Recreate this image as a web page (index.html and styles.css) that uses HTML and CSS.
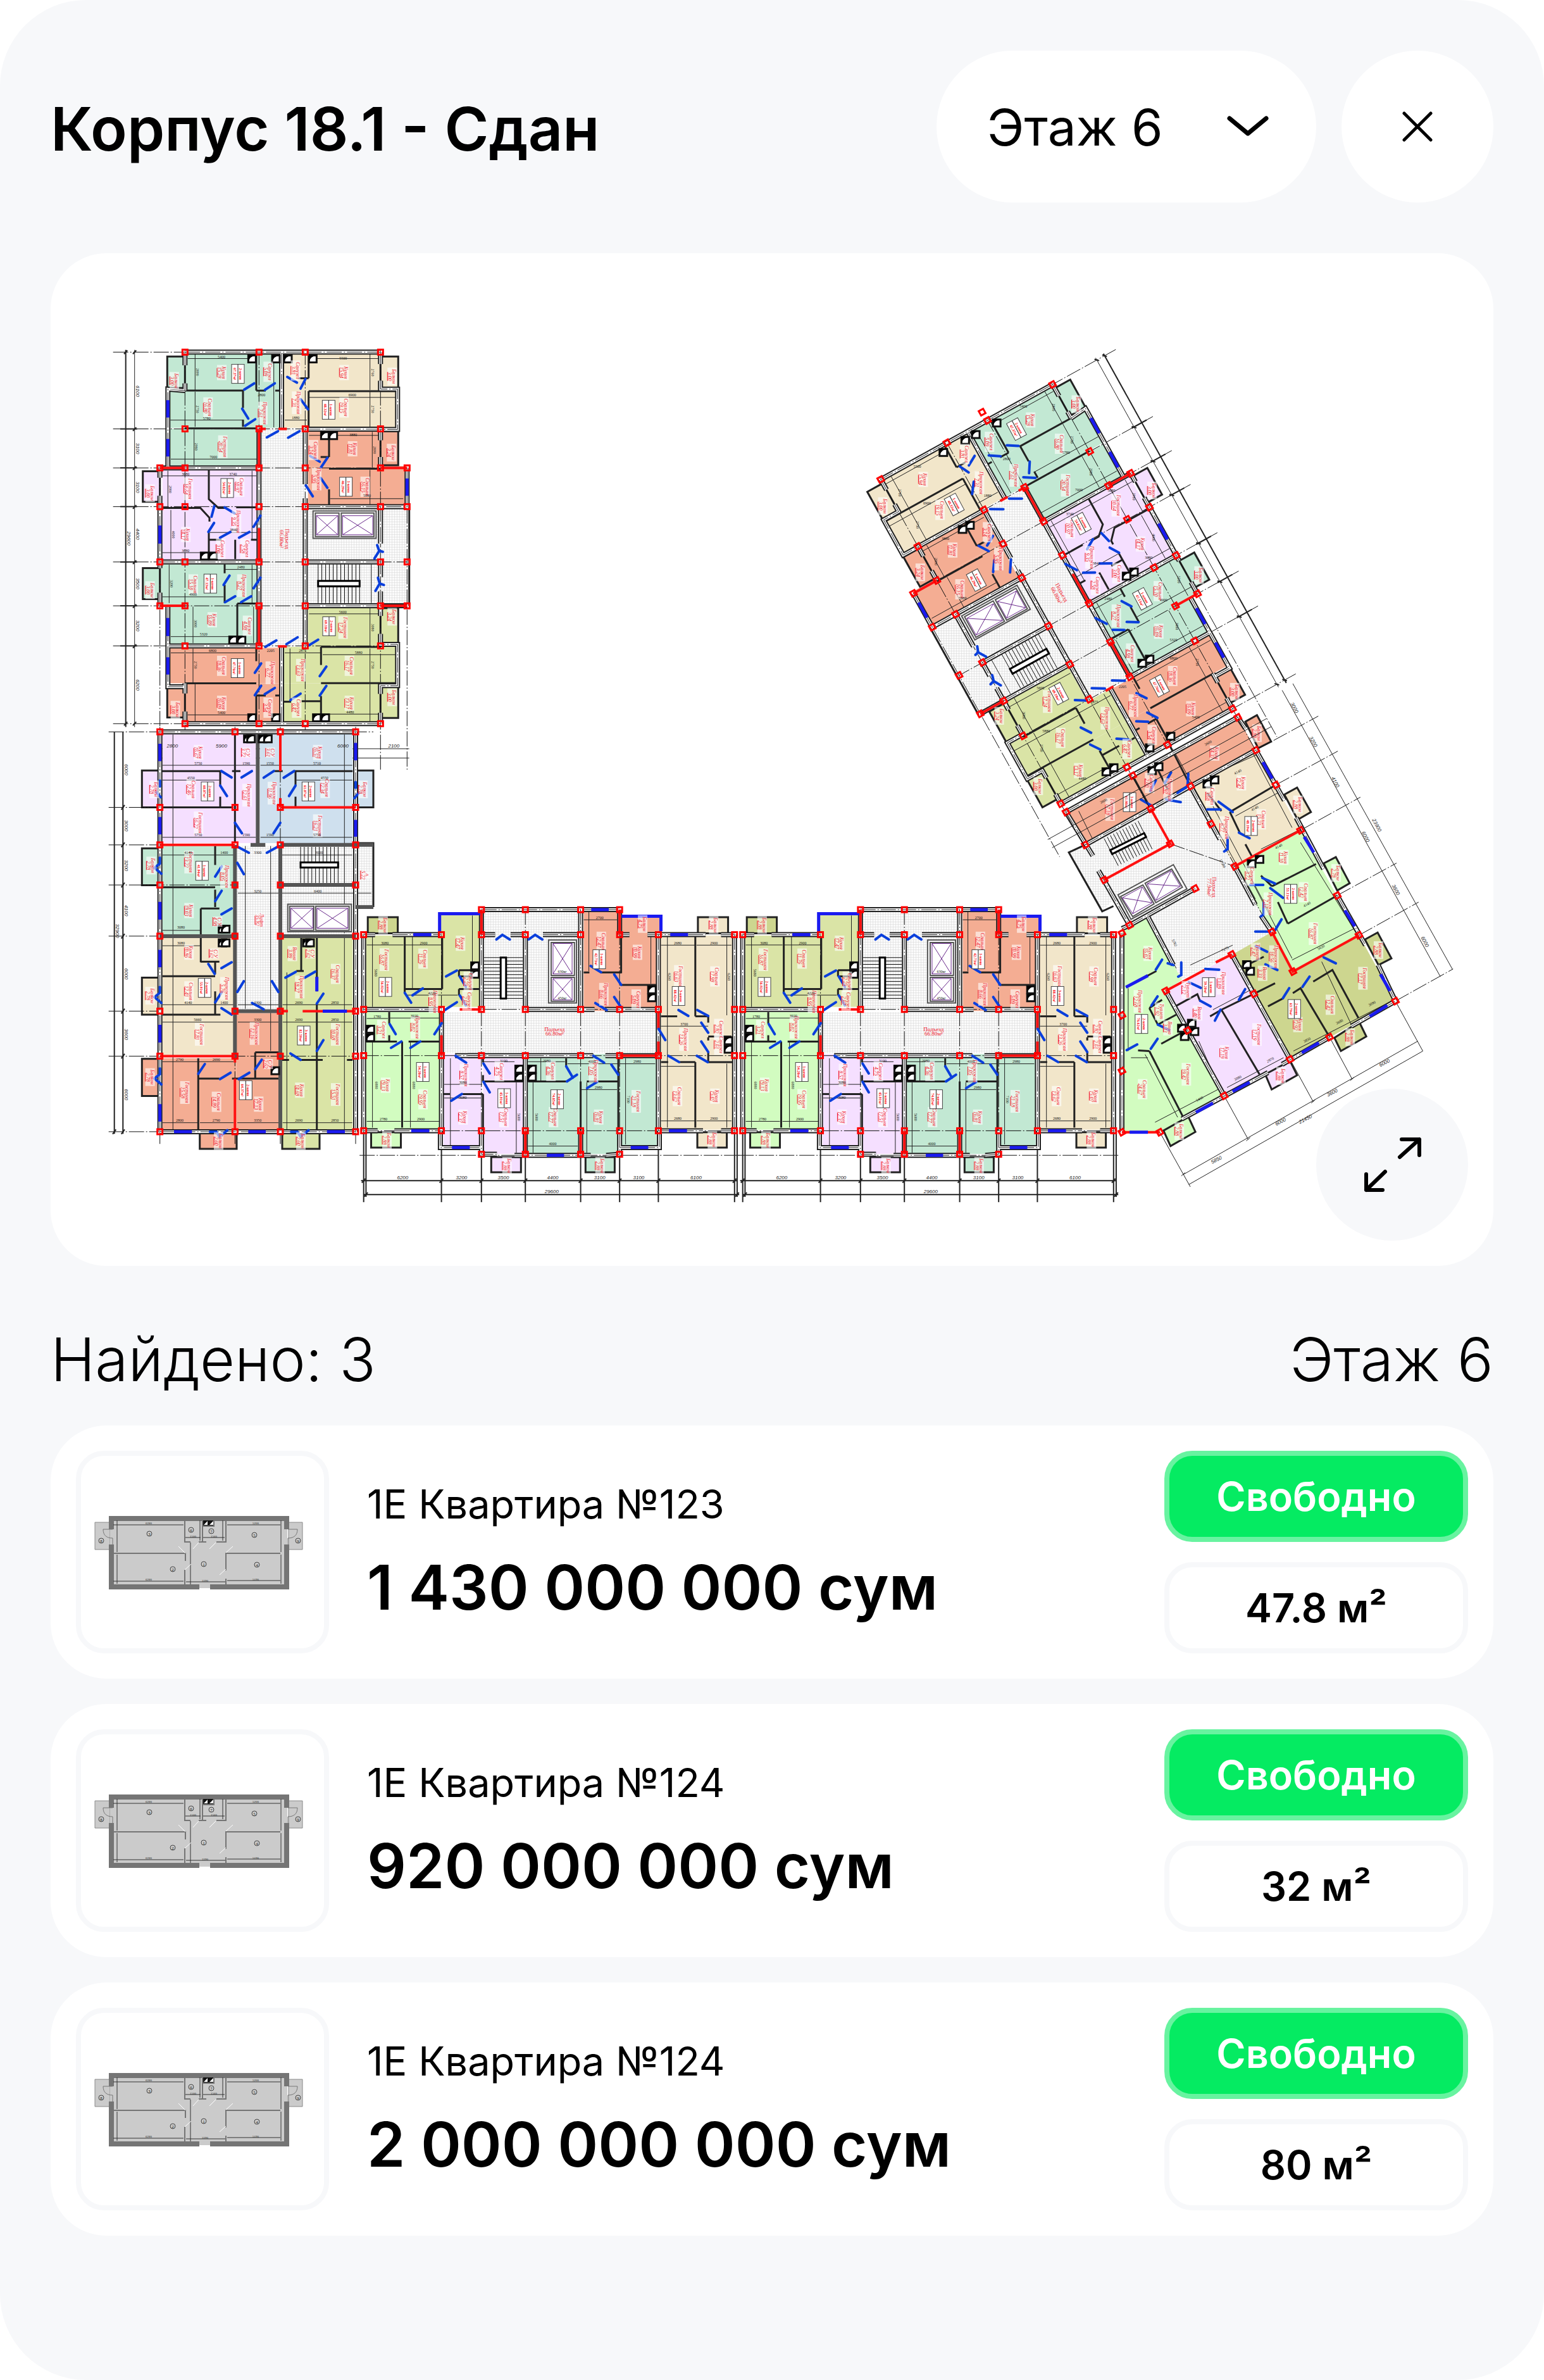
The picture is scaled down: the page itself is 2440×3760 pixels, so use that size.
FILE: index.html
```html
<!DOCTYPE html>
<html lang="ru">
<head>
<meta charset="utf-8">
<meta name="viewport" content="width=device-width, initial-scale=1">
<title>Корпус 18.1</title>
<link rel="stylesheet" href="styles.css">
</head>
<body>
<svg class="defs" aria-hidden="true">
  <symbol id="flat" viewBox="0 0 360 140">
    <g fill="#cbcbcb" stroke="#8a8a8a">
      <path d="M10 19h24v43H10zM316 19h22v43h-22z"/>
      <path stroke="none" d="M34 11h280v112H34z"/>
    </g>
    <g transform="translate(0 2)">
    <path fill="none" stroke="#757575" stroke-width="8" d="M36 28V11h277v17M36 52v67h139M192 119h121V52"/>
    <path fill="none" stroke="#757575" stroke-width="2" d="M39 66h114v12M152 92v24M152 14v34h9M174 48h12M180 14v34M202 48h15V14M303 66h-86v27M217 106v10M181 23h17V14"/>
    <path fill="none" stroke="#333" stroke-width="1" d="M39 21h111M39 110h111M219 21h84M219 109h84M45 14v50M45 68v46M304 14v50M304 68v46M153 41h24M181 41h34M176 14v32M212 14v32M161 49v66M154 111h62"/>
    <path fill="#111" d="M181 14h16v8h-16z"/><path fill="#fff" d="M188 15v6h-6zM197 15v6h-6z"/>
    <path fill="none" stroke="#fff" stroke-width="1" d="M142 55l11 11M165 59l9-10M191 59l10-10M217 65l11-10M152 92l10-9M207 100l10-9"/>
    <path fill="none" stroke="#777" d="M23 28h15M23 28c0 10 6 14 15 14v10M330 28h-15M330 28c0 10-6 14-15 14v10"/>
    <g fill="none" stroke="#444"><circle cx="96" cy="35" r="4"/><circle cx="162" cy="29" r="4"/><circle cx="194" cy="31" r="4"/><circle cx="262" cy="37" r="4"/><circle cx="133" cy="91" r="4"/><circle cx="182" cy="83" r="4"/><circle cx="266" cy="84" r="4"/><circle cx="20" cy="46" r="4"/><circle cx="331" cy="46" r="4"/></g>
    <g class="flat-text"><text x="96" y="38">3</text><text x="162" y="32">6</text><text x="194" y="34">7</text><text x="262" y="40">5</text><text x="133" y="94">2</text><text x="182" y="86">1</text><text x="266" y="87">4</text><text x="20" y="49">8</text><text x="331" y="49">9</text></g>
    <g class="flat-dim"><text x="95" y="20">6280</text><text x="264" y="20">5200</text><text x="95" y="109">6280</text><text x="264" y="109">5190</text><text x="165" y="41">1500</text><text x="198" y="41">1560</text><text x="184" y="111">3390</text></g>
    </g>
  </symbol>
</svg>
<main class="panel">
  <header class="top">
    <h1 class="title">Корпус 18.1 - Сдан</h1>
    <div class="floor">
      <select class="floor-select" aria-label="Этаж"><option>Этаж 6</option></select>
      <svg class="floor-chevron" viewBox="0 0 72 40" aria-hidden="true"><path d="M7 7l29 24L65 7"/></svg>
    </div>
    <button class="close" type="button" aria-label="Закрыть"><svg class="close-icon" viewBox="0 0 48 48" aria-hidden="true"><path d="M3 3l42 42M45 3L3 45"/></svg></button>
  </header>

  <section class="map" aria-label="План этажа">
    <svg class="plan" id="plan" viewBox="80 400 2280 1600">
      <defs><pattern id="tile" width="4" height="4" patternUnits="userSpaceOnUse"><path class="tile-back" d="M0 0h4v4H0z"/><path class="tile" d="M0 0H4V4"/></pattern></defs>
    </svg>
    <button class="expand" type="button" aria-label="Развернуть"><svg class="expand-icon" viewBox="0 0 96 96" aria-hidden="true"><path d="M60 36l31-28M63 8h28v25M37 59L7 88M7 63v25h26"/></svg></button>
  </section>

  <div class="summary"><span>Найдено: 3</span><span>Этаж 6</span></div>

  <ul class="list">
    <li class="card">
      <div class="thumb"><svg class="thumb-plan" viewBox="0 0 360 140" role="img" aria-label="Планировка"><use href="#flat"/></svg></div>
      <div class="info"><p class="name">1E Квартира №123</p><p class="price">1 430 000 000 сум</p></div>
      <div class="tags"><span class="tag tag-free">Свободно</span><span class="tag">47.8 м²</span></div>
    </li>
    <li class="card">
      <div class="thumb"><svg class="thumb-plan" viewBox="0 0 360 140" role="img" aria-label="Планировка"><use href="#flat"/></svg></div>
      <div class="info"><p class="name">1E Квартира №124</p><p class="price">920 000 000 сум</p></div>
      <div class="tags"><span class="tag tag-free">Свободно</span><span class="tag">32 м²</span></div>
    </li>
    <li class="card">
      <div class="thumb"><svg class="thumb-plan" viewBox="0 0 360 140" role="img" aria-label="Планировка"><use href="#flat"/></svg></div>
      <div class="info"><p class="name">1E Квартира №124</p><p class="price">2 000 000 000 сум</p></div>
      <div class="tags"><span class="tag tag-free">Свободно</span><span class="tag">80 м²</span></div>
    </li>
  </ul>
</main>
<script src="plan.js"></script>
</body>
</html>
```

FILE: styles.css
```css
* { box-sizing: border-box; }
body { margin: 0; background: #fff; color: #000; font-family: Inter, "Liberation Sans", sans-serif; }
h1, p, ul { margin: 0; padding: 0; }
button, select { border: 0; font: inherit; color: inherit; cursor: pointer; }
.defs { display: none; }

.panel { min-height: 100vh; padding: 80px; background: #f7f8fa; border-radius: 136px; }

.top { display: flex; align-items: center; gap: 40px; margin-bottom: 80px; }
.title { flex: 1; padding-top: 8px; font-size: 95px; line-height: 120px; font-weight: 600; }
.floor { position: relative; width: 600px; height: 240px; }
.floor-select { width: 100%; height: 100%; padding: 0 160px 0 80px; appearance: none; background: #fff; border-radius: 120px; font-size: 80px; }
.floor-chevron { position: absolute; top: 100px; right: 72px; width: 72px; height: 40px; pointer-events: none; }
.floor-chevron path { fill: none; stroke: #000; stroke-width: 7; stroke-linecap: round; stroke-linejoin: round; }
.close { display: grid; place-items: center; width: 240px; height: 240px; padding: 0; background: #fff; border-radius: 50%; }
.close-icon { width: 48px; height: 48px; fill: none; stroke: #000; stroke-width: 5; stroke-linecap: round; }

.map { position: relative; background: #fff; border-radius: 88px; overflow: hidden; }
.plan { display: block; width: 100%; height: auto; }
.expand { position: absolute; right: 40px; bottom: 40px; display: grid; place-items: center; width: 240px; height: 240px; padding: 0; background: #f7f8fa; border-radius: 50%; }
.expand-icon { width: 96px; height: 96px; fill: none; stroke: #000; stroke-width: 6; stroke-linecap: round; stroke-linejoin: round; }

.summary { display: flex; justify-content: space-between; margin: 88px 0 44px; font-size: 95px; line-height: 120px; font-weight: 300; }

.list { display: flex; flex-direction: column; gap: 40px; list-style: none; }
.card { display: flex; gap: 60px; padding: 40px; background: #fff; border-radius: 88px; }
.thumb { display: grid; place-items: center; width: 400px; height: 320px; border: 8px solid #f7f8fa; border-radius: 44px; }
.thumb-plan { width: 360px; height: 140px; margin-top: 8px; }
.info { flex: 1; display: flex; flex-direction: column; justify-content: center; gap: 32px; }
.name { font-size: 63px; line-height: 80px; }
.price { font-size: 97px; line-height: 120px; font-weight: 600; }
.tags { display: flex; flex-direction: column; gap: 32px; width: 480px; }
.tag { display: grid; place-items: center; height: 144px; border: 8px solid #f7f8fa; border-radius: 44px; font-size: 63px; font-weight: 600; }
.tag-free { background: #05eb62; border-color: #68f3a0; color: #fff; }

.flat-text { font: 7px "Liberation Serif", serif; text-anchor: middle; fill: #222; }
.flat-dim { font: 5px "Liberation Serif", serif; text-anchor: middle; fill: #222; }

.tile-back { fill: #fbfbfb; }
.tile { fill: none; stroke: #d6d6d6; stroke-width: 1; }
.hall { fill: url(#tile); }
.thin { fill: none; stroke: #222; stroke-width: 3; }
.wall-out { fill: none; stroke: #222; stroke-width: 8; }
.wall-in { fill: none; stroke: #fff; stroke-width: 4; }
.gray { fill: none; stroke: #555; stroke-width: 6; }
.red { fill: none; stroke: #f11; stroke-width: 4; }
.axis { fill: none; stroke: #111; stroke-width: 1; stroke-dasharray: 24 3 2 3; }
.wall-axis { fill: none; stroke: #222; stroke-width: 1; stroke-dasharray: 24 3 2 3; }
.dim { fill: none; stroke: #222; stroke-width: 1; }
.scale { fill: none; stroke: #222; stroke-width: 2; }
.column { fill: none; stroke: #f00; stroke-width: 3; }
.door { fill: none; stroke: #0a3fdc; stroke-width: 4; stroke-linecap: round; }
.window { fill: none; stroke: #1a1af0; stroke-width: 5; }
.lift { fill: #fff; stroke: #6a2a8c; stroke-width: 1; }
.lift-box { fill: #fff; stroke: #555; stroke-width: 2; }
.tread { fill: none; stroke: #111; stroke-width: 1; }
.rail { fill: #fff; stroke: #000; stroke-width: 3; }
.shaft { fill: #fff; stroke: #111; stroke-width: 3; }
.shaft-fill { fill: #000; }
.label { font: 8px "Liberation Serif", serif; font-style: italic; fill: #f01428; text-anchor: middle; }
.label-line { stroke: #f01428; stroke-width: 1; }
.label-box { fill: #fff; fill-opacity: .6; }
.area { font: bold 6px "Liberation Serif", serif; fill: #f00; text-anchor: middle; }
.area-box { fill: #fff; stroke: #444; stroke-width: 1; }
.num { font: italic 8px "Liberation Sans", sans-serif; fill: #222; text-anchor: middle; }
.size { font: 6px "Liberation Serif", serif; fill: #111; text-anchor: middle; }
.hall-name { font: 9px "Liberation Serif", serif; fill: #f01428; text-anchor: middle; }
```

FILE: plan.js
```js
// Draws the storey plan: each block lists its shapes in the block's own units,
// and `at` places those units on the plan.
const svg = document.getElementById('plan');
const NS = 'http://www.w3.org/2000/svg';

const fills = { t: '#c2e8d3', b: '#f2e6ca', s: '#f4ad93', l: '#f5dfff', o: '#dae4a6', u: '#cfe0ee', g: '#d2fcc0', k: '#cdd68f' };

function add(tag, attrs, text) {
  const el = document.createElementNS(NS, tag);
  for (const k in attrs) el.setAttribute(k, attrs[k]);
  if (text) el.textContent = text;
  svg.appendChild(el);
}
const items = s => (s || '').split(';').map(x => x.trim()).filter(Boolean);
const nums = s => s.trim().split(/\s+/).map(Number);
const pairs = n => n.reduce((r, v, i) => (i % 2 ? r[r.length - 1].push(v) : r.push([v]), r), []);
const quad = n => n.length === 4 ? [[n[0], n[1]], [n[2], n[1]], [n[2], n[3]], [n[0], n[3]]] : pairs(n);
const mix = (a, b, t) => [a[0] + (b[0] - a[0]) * t, a[1] + (b[1] - a[1]) * t];

function drawBlock(b, at) {
  const d = (pts, close) => 'M' + pts.map(p => at(p[0], p[1]).map(v => v.toFixed(1)).join(' ')).join('L') + (close ? 'Z' : '');
  const line = (cls, pts) => add('path', { class: cls, d: d(pts) });
  const shape = (cls, pts) => add('path', { class: cls, d: d(pts, true) });
  const lines = (cls, s) => items(s).forEach(i => line(cls, pairs(nums(i))));

  items(b.halls).forEach(i => shape('hall', quad(nums(i))));
  items(b.rooms).forEach(i => add('path', { fill: fills[i[0]], d: d(quad(nums(i.slice(1))), true) }));
  items(b.balconies).forEach(i => add('path', { class: 'thin', style: 'fill:' + fills[i[0]], d: d(quad(nums(i.slice(1))), true) }));
  lines('axis', b.axes);
  lines('dim', b.dims);
  lines('scale', b.scales);
  lines('thin', b.thin);
  lines('wall-out', b.walls);
  lines('wall-in', b.walls);
  lines('wall-axis', b.walls);
  lines('gray', b.gray);
  lines('red', b.red);
  lines('window', b.windows);
  items(b.stairs).forEach(i => {
    const [n, ...r] = nums(i), q = quad(r);
    for (let k = 0; k <= n; k++) line('tread', [mix(q[0], q[1], k / n), mix(q[3], q[2], k / n)]);
    const m = (u, v) => mix(mix(q[0], q[1], u), mix(q[3], q[2], u), v);
    shape('rail', [m(0, .43), m(1, .43), m(1, .57), m(0, .57)]);
  });
  items(b.liftBoxes).forEach(i => shape('lift-box', quad(nums(i))));
  items(b.lifts).forEach(i => {
    const q = quad(nums(i));
    shape('lift', q); line('lift', [q[0], q[2]]); line('lift', [q[1], q[3]]);
  });
  items(b.shafts).forEach(i => {
    const [x, y] = at(...nums(i));
    add('rect', { class: 'shaft', x: x - 6, y: y - 5, width: 12, height: 11 });
    add('path', { class: 'shaft-fill', d: `M${x - 6} ${y + 5}V${y - 5}H${x + 6}Q${x - 3} ${y - 4} ${x - 6} ${y + 5}` });
  });
  lines('door', b.doors);
  const o = at(0, 0), e = at(100, 0);
  const turn = b.turn !== undefined ? b.turn : Math.atan2(e[1] - o[1], e[0] - o[0]) * 180 / Math.PI;
  const column = (x, y) => {
    const [px, py] = at(x, y);
    add('rect', { class: 'column', x: px - 4, y: py - 4, width: 8, height: 8, transform: `rotate(${turn} ${px} ${py})` });
  };
  items(b.columns).forEach(i => {
    const [y, ...xs] = nums(i);
    xs.forEach(x => column(x, y));
  });
  items(b.points).forEach(i => column(...nums(i)));
  items(b.labels).forEach(i => {
    const [x, y, name, n] = i.split(/\s+/), [px, py] = at(+x, +y);
    const w = name.length * 4;
    add('rect', { class: 'label-box', x: px - 7, y: py - w / 2 - 2, width: 15, height: w + 4 });
    add('text', { class: 'label', transform: `translate(${px + 1} ${py}) rotate(90)` }, name);
    add('text', { class: 'label', transform: `translate(${px - 6} ${py}) rotate(90)` }, n);
    add('path', { class: 'label-line', d: `M${px - 7} ${py - 7}v14` });
  });
  items(b.areas).forEach(i => {
    const [x, y, name, n] = i.split(/\s+/), [px, py] = at(+x, +y);
    const t = o[0] < e[0] ? 90 : 62;
    const g = `translate(${px} ${py}) rotate(${t})`;
    add('rect', { class: 'area-box', x: -15, y: -10, width: 30, height: 20, transform: g });
    add('path', { class: 'dim', d: 'M-15 0h30', transform: g });
    add('text', { class: 'area', y: -2, transform: g }, name);
    add('text', { class: 'area', y: 7, transform: g }, n);
  });
  const texts = (cls, s) => items(s).forEach(i => {
    const [x, y, n, r] = i.split(/\s+/), [px, py] = at(+x, +y);
    add('text', { class: cls, transform: `translate(${px} ${py}) rotate(${r || 0})` }, n);
  });
  texts('size', b.sizes);
  texts('num', b.nums);
  texts('hall-name', b.names);
}

const tower = {
  halls: '748 386 967 1226; 967 687 1450 1071',
  rooms: `t 397 95 845 238; t 320 238 845 382; t 320 386 748 528; b 867 95 1324 238; b 867 238 1398 382;
    s 980 395 1324 530; s 980 530 1445 680; l 290 545 748 892; t 278 910 748 1071; t 320 1071 748 1218;
    s 320 1233 845 1371; s 397 1371 845 1520; o 980 1080 1324 1230; o 867 1230 1398 1371; o 867 1371 1324 1520`,
  balconies: `t 313 106 397 228; b 1324 106 1408 228; s 1324 395 1408 527; l 197 550 278 668; t 197 925 278 1045;
    s 313 1384 397 1503; o 1324 1080 1408 1216; o 1324 1384 1408 1505`,
  axes: `397 80 397 1705; 748 80 748 1540; 967 80 967 1705; 1324 80 1324 1705; 278 537 278 1705; 1450 537 1450 1705;
    56 89 397 89; 56 386 1324 386; 56 537 1450 537; 56 687 1450 687; 56 901 1450 901; 56 1071 1450 1071; 56 1226 1324 1226; 56 1527 397 1527`,
  scales: `116 80 116 1540; 90 386 170 386; 90 537 170 537; 90 687 170 687; 90 901 170 901; 90 1071 170 1071; 90 1226 170 1226;
    108 96 124 82; 108 1534 124 1520; 150 96 166 82; 150 1534 166 1520; 150 394 166 380; 150 545 166 531; 150 695 166 681; 150 909 166 895; 150 1079 166 1065; 150 1234 166 1220`,
  dims: `158 80 158 1540; 278 1624 1460 1624; 278 1660 1460 1660;
    410 114 735 114; 445 98 445 236; 328 352 670 352; 445 242 445 378; 330 503 745 503; 440 388 440 526; 985 114 1324 114; 1274 98 1274 236; 985 264 1395 264; 1274 242 1274 380;
    985 411 1324 411; 1285 398 1285 540; 1085 656 1432 656; 1274 545 1274 678; 290 568 505 568; 316 548 316 687; 515 568 735 568; 715 548 715 815; 330 700 330 890; 290 865 510 865; 515 787 745 787;
    322 912 322 1060; 290 1036 580 1036; 588 930 740 930; 715 912 715 1060; 435 1074 435 1215; 330 1190 640 1190; 722 1074 722 1215; 330 1253 730 1253; 435 1236 435 1368; 445 1374 445 1518; 410 1493 730 1493;
    985 1102 1324 1102; 1274 1080 1274 1228; 870 1253 1040 1253; 1050 1260 1395 1260; 1274 1236 1274 1368; 1274 1374 1274 1518; 1050 1490 1320 1490; 895 1236 895 1440; 818 100 818 380; 870 352 975 352; 1280 910 1280 1060`,
  thin: `397 238 675 238; 672 238 672 305; 672 350 672 378; 735 95 735 238; 735 238 780 238; 825 238 845 238; 397 384 735 384; 983 95 983 190; 935 190 983 190; 983 240 1400 240; 983 240 983 380;
    1080 398 1080 495; 1040 495 1080 495; 1080 540 1324 540; 1080 620 1080 680; 510 545 510 658 555 692 590 692; 640 690 748 690; 290 692 470 692 513 730 513 745; 510 785 510 890; 510 815 570 815; 635 815 635 890; 710 815 748 815;
    585 910 585 945; 585 990 585 1060; 645 1062 748 1062; 645 1062 645 1215; 735 1233 735 1285; 397 1371 735 1371; 735 1420 735 1520; 735 1418 780 1418; 825 1418 845 1418;
    1042 1230 1042 1300; 1042 1370 1395 1370; 1042 1230 1324 1230; 867 1442 900 1442; 950 1440 1042 1440; 1042 1420 1042 1520; 1460 687 1460 1071`,
  walls: `397 89 1324 89; 397 1527 1324 1527; 397 89 397 140; 397 210 397 238; 397 1371 397 1410; 397 1480 397 1527; 397 238 316 232 316 537; 278 537 748 537; 748 386 748 1226; 967 386 967 600; 967 655 967 1226;
    278 901 748 901; 967 687 1450 687; 967 901 1324 901; 967 1071 1450 1071; 278 537 278 575; 278 645 278 925; 278 1020 278 1071; 316 1071 316 1384 397 1384; 320 1226 748 1226; 967 387 1324 387;
    1324 89 1324 135; 1324 200 1324 232 1405 232 1405 388 1324 388 1324 430; 1324 495 1324 537; 1324 687 1324 830; 1324 890 1324 960; 1324 1015 1324 1110; 1324 1180 1324 1220 1405 1220 1405 1380 1324 1380 1324 1412; 1324 1485 1324 1527; 1450 537 1450 687;
    855 95 855 386; 855 1226 855 1520`,
  red: '748 386 748 537; 748 770 748 901; 748 1071 748 1226; 278 537 397 537; 1324 537 1450 537; 278 1071 397 1071; 1324 1071 1450 1071; 750 386 780 386; 840 386 880 386; 838 1228 880 1228',
  windows: '316 275 316 342; 316 425 316 493; 278 760 278 830; 316 1118 316 1188; 316 1270 316 1337; 1450 578 1450 645',
  stairs: '11 1028 910 1225 1060',
  liftBoxes: '1004 704 1303 810; 1015 712 1127 803; 1138 712 1293 803',
  lifts: '1020 722 1122 796; 1144 722 1287 796',
  shafts: '715 114; 828 114; 885 114; 1003 114; 1060 411; 1100 411; 490 877; 530 877; 625 1202; 665 1202; 715 1503; 828 1503; 1022 1503; 1062 1503',
  doors: `678 234 725 210; 776 235 823 210; 882 185 928 207; 968 193 945 230; 668 308 697 346; 682 374 730 349; 945 271 980 310; 785 419 838 395; 886 420 940 395;
    990 491 1036 513; 1072 498 1042 535; 1040 576 1072 614; 970 605 1003 647; 523 726 536 685; 585 690 632 713; 508 785 535 750; 563 807 612 785; 653 807 702 785; 722 765 755 722;
    580 990 608 954; 587 1057 635 1034; 663 1057 711 1034; 722 1003 755 962; 778 1230 830 1205; 878 1219 931 1193; 980 1226 1028 1202; 728 1330 758 1294; 728 1417 758 1380; 775 1413 823 1389; 1036 1343 1067 1306; 1036 1418 1067 1381; 897 1436 945 1411;
    1295 888 1318 858 1308 836; 1318 858 1335 862; 1300 1013 1320 985 1312 962; 1320 985 1340 990`,
  columns: '89 397 748 967 1324; 386 397 748 967 1324; 537 278 397 748 967 1324 1450; 687 278 397 748 967 1324 1450; 901 278 397 748 967 1324 1450; 1071 278 397 748 967 1324 1450; 1226 397 748 967 1324; 1527 397 748 967 1324',
  labels: `570 168 Кухня 15.28; 505 303 Спальня 16.80; 575 455 Гостиная 20.54; 345 200 Балкон 3.00; 790 165 Санузел 5.09; 765 325 Прихожая 7.61; 920 160 Санузел 3.81; 925 285 Прихожая 7.31; 1150 168 Кухня 15.94; 1150 303 Спальня 19.15; 1378 183 Балкон 3.00;
    1005 468 Санузел 3.14; 1190 463 Кухня 11.81; 1020 580 Прихожая 5.95; 1250 610 Спальня 16.15; 1375 478 Балкон 3.24; 412 618 Гостиная 10.64; 655 610 Спальня 10.97; 230 635 Балкон 3.00; 400 795 Кухня 14.17; 640 745 Прихожая 9.35; 565 850 Санузел 3.00; 680 850 Санузел 2.58;
    435 988 Спальня 15.10; 665 993 Прихожая 8.27; 230 1010 Балкон 3.00; 525 1125 Кухня 16.09; 692 1148 Санузел 4.98; 570 1303 Спальня 18.36; 800 1330 Прихожая 6.77; 570 1448 Кухня 16.09; 790 1465 Санузел 3.54; 350 1473 Балкон 3.00;
    1145 1155 Гостиная 17.24; 1378 1113 Балкон 3.24; 945 1320 Прихожая 13.63; 1175 1303 Спальня 16.17; 1175 1448 Кухня 13.17; 925 1465 Санузел 6.47; 1378 1425 Балкон 3.00`,
  areas: '648 173 2-комн 67.37м²; 1078 312 1-комн 48.32м²; 1160 610 1-комн 46.29м²; 597 615 2-комн 54.02м²; 517 985 1-комн 47.13м²; 646 1312 1-комн 47.76м²; 1080 1150 2-комн 69.10м²',
  sizes: `570 112 5400; 500 350 5780; 532 500 7000; 1147 118 5500; 1190 260 6900; 760 260 2800; 922 348 1880; 1195 415 3880; 1260 650 5980; 400 565 3680; 625 565 3740; 400 862 3680; 628 782 3840; 435 1032 4900; 662 926 2480; 485 1186 5320;
    528 1250 6800; 570 1490 5400; 803 1250 2205; 955 1250 2875; 1145 1100 5600; 1220 1257 5880; 1180 1487 4480; 450 166 2890 90; 450 310 2750 90; 445 455 2980 90; 1280 168 2760 90; 1280 310 2750 90; 1290 468 2890 90; 322 620 2980 90; 335 795 4000 90; 328 985 3200 90; 442 1140 3000 90; 442 1300 2750 90; 1280 1155 3080 90; 1280 1300 2750 90`
};
const towerText = {
  nums: '165 240 6100 90; 165 462 3100 90; 165 612 3100 90; 165 793 4400 90; 165 985 3500 90; 165 1148 3200 90; 165 1377 6200 90; 122 810 29600 90; 337 1620 2800; 570 1620 5900; 1146 1620 6000; 1387 1620 2100',
  names: '873 812 Подъезд 90; 845 812 66.80м² 90'
};
const mirroredText = { names: '845 812 Подъезд 62; 873 812 66.80м² 62' };

const corner = {
  halls: '640 450 842 1015; 842 450 1192 755; 1192 440 1290 660',
  rooms: 'l 290 65 733 440; u 752 65 1192 440; t 290 450 627 755; b 290 765 627 1170; s 290 1180 640 1425; s 640 1025 842 1425; o 858 765 1192 1425',
  balconies: 'l 193 190 278 317; u 1206 190 1290 317; t 193 458 278 585; b 193 903 278 1030; s 193 1182 278 1310; s 467 1433 642 1492; o 858 1433 1035 1492',
  axes: '35 57 1290 57; 35 317 278 317; 35 446 278 446; 35 584 634 584; 35 760 278 760; 35 1018 278 1018; 35 1173 1206 1173; 35 1433 278 1433; 278 40 278 1475; 634 40 634 1475; 849 40 849 1475; 1206 40 1206 1475',
  scales: '62 57 62 1440; 103 57 103 1440; 95 325 111 309; 95 454 111 438; 95 592 111 576; 95 768 111 752; 95 1026 111 1010; 95 1181 111 1165; 54 1441 70 1425; 95 1441 111 1425',
  dims: `340 66 340 1425; 1153 66 1153 750; 290 172 733 172; 755 172 1190 172; 290 420 733 420; 755 420 1190 420; 290 223 560 223; 925 223 1190 223; 290 481 627 481; 850 481 1190 481; 648 612 842 612; 850 612 1280 612; 290 740 470 740; 290 793 470 793; 803 450 803 1155; 683 450 683 1010; 290 996 627 996; 648 996 842 996; 860 996 1190 996; 290 1056 627 1056; 648 1056 842 1056; 860 1056 1190 1056; 290 1402 460 1402; 468 1402 627 1402; 645 1402 842 1402; 860 1402 1190 1402; 880 885 880 1425; 1153 765 1153 1425; 290 1192 627 1192`,
  gray: '742 65 742 440; 634 446 634 1180; 849 446 849 1425; 849 446 1290 446; 708 446 778 446; 849 584 1206 584; 278 760 634 760; 849 760 1206 760; 634 1018 849 1018; 1206 660 1290 660',
  thin: `634 65 634 440; 278 192 570 192; 620 192 660 192; 820 192 860 192; 915 192 1192 192; 564 192 564 240; 564 280 564 317; 290 317 627 317; 921 192 921 240; 921 280 921 317; 540 450 540 515; 540 600 540 660; 290 592 540 592; 472 665 472 850; 472 665 560 665; 472 848 560 848; 540 848 540 890; 540 950 540 1030; 290 898 540 898; 290 1030 565 1030;
    460 1180 460 1425; 460 1250 560 1250; 620 1250 842 1250; 730 1160 730 1250; 730 1160 842 1160; 1022 760 1022 950; 1022 990 1022 1425; 948 765 948 880; 925 880 960 880; 858 1186 890 1186; 945 1186 1050 1186; 1165 1186 1192 1186; 1206 440 1290 440 1290 660`,
  walls: '278 57 1206 57; 278 57 278 1433; 1206 57 1206 1433; 278 1433 1206 1433',
  red: '849 65 849 192; 849 285 849 317; 849 317 1206 317; 278 446 634 446; 278 1173 634 1173; 634 1180 634 1195; 634 1250 634 1425; 955 1018 1206 1018; 849 1018 885 1018',
  windows: '278 98 278 158; 278 350 278 410; 278 642 278 703; 278 807 278 867; 278 1065 278 1126; 278 1338 278 1398; 1206 95 1206 155; 1206 360 1206 418; 345 1433 430 1433; 697 1433 780 1433; 1070 1433 1155 1433; 1022 900 1022 950; 1050 1018 1165 1018',
  stairs: '10 945 453 1123 577',
  liftBoxes: '884 650 1186 745; 893 657 1008 740; 1017 657 1175 740',
  lifts: '899 664 1003 733; 1023 664 1169 733',
  shafts: '695 80; 710 80; 765 80; 790 80; 575 735; 590 735; 575 782; 590 782; 975 782; 990 782; 825 1222',
  doors: `570 192 618 214; 665 214 714 192; 770 215 818 192; 865 215 914 192; 564 242 596 278; 921 242 890 278; 634 370 667 406; 849 370 817 406; 645 452 700 473; 785 473 838 452; 540 555 571 520; 645 508 676 547; 540 640 571 604; 570 685 618 665; 570 870 618 850; 508 856 538 890; 645 952 676 915; 809 915 840 952; 540 988 571 953; 570 1008 618 1030; 715 990 770 1012; 1022 992 1053 958; 873 903 922 883; 965 903 1015 882; 1022 1155 1053 1118; 897 1164 945 1186; 460 1234 491 1200; 563 1252 613 1230; 652 1252 702 1230; 730 1218 761 1185;
    278 225 278 245; 262 265 282 282; 1206 230 1206 250; 1200 285 1222 267; 278 490 278 510 252 525 285 545; 278 935 278 955 252 970 285 990; 278 1215 278 1235 252 1250 285 1270; 515 1433 545 1433 560 1450 598 1428; 900 1433 930 1433 945 1450 983 1428`,
  columns: '57 278 634 849 1206; 317 278 634 849 1206; 446 278 634 849 1206; 584 278 634 849 1206; 760 278 634 849 1206; 1018 278 634 849 1206; 1173 278 634 849 1206; 1433 278 634 849 1206',
  labels: `460 128 Кухня 16.67; 685 128 С/У 3.72; 800 128 С/У 3.61; 1025 128 Кухня 16.57; 425 255 Спальня 12.46; 690 275 Прихожая 12.61; 810 268 Прихожая 11.96; 1060 250 Спальня 12.34; 250 255 Балкон 2.78; 1240 255 Балкон 2.78; 460 370 Гостиная 16.22; 1025 380 Гостиная 16.21;
    415 505 Гостиная 13.22; 235 517 Балкон 2.78; 585 555 Прихожая 8.05; 415 672 Кухня 18.03; 550 710 С/У 4.98; 750 705 Лифт 35.82; 1250 550 л. 5.22; 415 815 Кухня 10.86; 532 820 С/У 3.62; 415 950 Спальня 12.41; 230 965 Балкон 2.78; 585 940 Прихожая 5.76; 465 1098 Гостиная 17.81;
    725 1095 Прихожая 12.16; 395 1298 Гостиная 15.58; 545 1330 Спальня 14.89; 745 1338 Кухня 17.13; 790 1200 С/У 2.62; 230 1245 Балкон 2.78; 555 1465 Балкон 2.60; 945 1465 Балкон 2.60; 905 820 Ванна 3.89; 990 820 С/У 2.62; 1110 890 Спальня 16.37; 940 935 Прихожая 18.27; 1110 1098 Гостиная 10.68; 940 1290 Кухня 14.68; 1110 1305 Гостиная 15.51`,
  areas: '504 262 2-комн 60.07м²; 982 262 2-комн 61.07м²; 478 535 1-комн 41.94м²; 490 938 2-комн 53.91м²; 685 1290 2-комн 64.37м²; 960 1102 3-комн 82.59м²',
  sizes: `460 169 5750; 687 169 1590; 800 169 1550; 1023 169 5710; 425 220 4550; 1058 220 4550; 460 417 5750; 1023 417 5750; 687 417 1590; 800 417 1590; 412 478 4140; 583 478 1400; 742 478 3300; 1033 478 3000; 742 610 3250; 1027 610 6400; 378 735 3080; 378 789 3080; 412 993 4140; 583 993 1400; 742 993 3300; 937 993 2690; 1108 993 2850; 457 1053 5660; 742 1053 3300; 937 1053 2690; 1108 1053 2850; 372 1190 2790; 545 1190 2690; 372 1398 2800; 545 1398 2790; 742 1398 3350; 937 1398 2690; 1108 1398 2850`,
  nums: '110 187 6000 90; 110 380 3000 90; 110 517 3200 90; 110 672 4100 90; 110 890 6000 90; 110 1098 3600 90; 110 1305 6000 90; 70 742 32900 90'
};

const section = {
  halls: '500 112 868 587; 345 600 1175 795',
  rooms: `o 45 235 487 575; o 330 130 487 235; s 888 120 1030 595; s 1030 143 1187 580; b 1187 235 1465 1160; g 45 600 337 1160; l 345 800 492 1240; l 498 818 655 1275; t 672 818 868 1275; t 868 800 1027 1275; t 1027 818 1170 1240`,
  balconies: 'k 52 148 168 225; b 1330 148 1447 225; b 1328 1172 1442 1245; g 65 1172 180 1245; l 530 1290 645 1363; t 895 1290 1008 1363',
  axes: '20 1282 1490 1282; 337 231 337 1165; 492 112 492 1277; 662 112 662 1277; 876 112 876 1277; 1027 112 1027 1277; 36 1165 1472 1165; 36 807 1472 807; 492 587 1177 587',
  scales: `36 1165 36 1505; 45 1165 45 1480; 337 1165 337 1505; 492 1277 492 1505; 662 1277 662 1505; 876 1277 876 1505; 1027 1277 1027 1505; 1177 1165 1177 1505; 1472 1165 1472 1505; 1482 1165 1482 1480; 26 1403 1480 1403; 36 1469 1490 1469;
    29 1413 43 1393; 330 1413 344 1393; 485 1413 499 1393; 655 1413 669 1393; 869 1413 883 1393; 1020 1413 1034 1393; 1170 1413 1184 1393; 1465 1413 1479 1393; 38 1479 52 1459; 1475 1479 1489 1459`,
  dims: `48 280 190 280; 198 280 340 280; 70 240 70 575; 225 240 225 490; 457 140 457 400; 888 160 1017 160; 908 120 908 405; 1148 240 1148 465; 1187 281 1318 281; 1325 281 1460 281; 1212 240 1212 615; 1442 240 1442 615; 48 630 130 630; 138 628 328 628; 70 740 70 1150; 217 740 217 1150; 48 1120 180 1120; 190 1120 328 1120; 372 820 372 1235; 348 944 495 944; 348 1009 490 1009; 498 836 620 836; 627 935 627 1270; 692 935 692 1270; 722 820 722 930; 672 836 815 836; 825 846 1020 846; 672 1238 865 1238; 876 969 1017 969; 900 935 900 1270; 1050 820 1050 1230; 1027 846 1165 846; 1187 667 1370 667; 1212 620 1212 1150; 1187 858 1318 858; 1442 845 1442 1150; 1187 1118 1318 1118; 1325 1118 1460 1118; 200 519 400 519`,
  thin: `195 240 195 510; 340 240 340 490; 195 490 340 490; 405 400 487 400; 405 400 405 430; 405 490 405 520; 405 490 487 490; 405 430 487 430; 135 600 135 655; 135 710 135 740; 45 740 165 740; 210 740 337 740; 185 740 185 1150; 888 411 910 411; 955 411 1033 411; 1033 235 1033 415; 1033 470 1170 470; 1320 240 1320 620; 1187 620 1250 620; 1320 620 1370 620; 1370 620 1370 650; 1370 716 1460 716; 1370 720 1370 735; 1370 790 1370 838; 1187 838 1215 838; 1260 838 1320 838; 1370 838 1465 838; 1320 838 1320 1150; 345 990 370 990; 415 990 498 990; 498 818 498 840; 498 900 498 930; 498 930 655 930; 498 990 498 1275; 672 930 820 930; 820 820 820 860; 900 930 1020 930; 876 930 876 1275; 1022 820 1022 1240`,
  walls: `36 231 36 1165; 1472 231 1472 1165; 36 231 80 231; 148 231 337 231; 36 587 337 587; 492 112 492 587; 662 231 662 587; 876 112 876 587; 492 112 1027 112; 1027 112 1027 231; 492 231 545 231; 605 231 670 231; 730 231 876 231; 1035 231 1065 231; 1135 231 1360 231; 1420 231 1472 231; 662 587 930 587; 970 587 1177 587;
    492 807 390 807; 440 807 925 807; 972 807 1177 807; 337 600 337 1165; 1177 231 1177 1165; 36 1165 90 1165; 155 1165 337 1165; 1177 1165 1350 1165; 1420 1165 1472 1165; 333 1165 333 1245 487 1245; 492 1165 492 1277 552 1277; 662 807 662 1277; 620 1282 915 1282; 876 1165 876 1277; 975 1282 1027 1277 1027 1165; 1027 1245 1181 1245 1181 1165`,
  red: '492 112 492 231; 1027 112 1027 231; 337 600 337 650; 337 710 337 807; 408 587 492 587; 1177 600 1177 680; 1177 740 1177 807; 1027 807 1177 807; 662 1165 662 1277; 876 1165 876 1277',
  windows: '228 231 298 231; 917 112 985 112; 1223 231 1292 231; 220 1165 290 1165; 378 1245 447 1245; 745 1282 812 1282; 1070 1245 1138 1245; 1218 1165 1288 1165',
  glazing: '330 225 330 131 487 131; 1035 143 1187 143 1187 215',
  stairs: '12 652 340 652 535 502 535 502 340',
  liftBoxes: '752 256 860 556; 762 268 852 425; 762 434 852 548',
  lifts: '769 273 843 418; 769 440 843 542',
  shafts: '467 378; 467 418; 62 680; 62 720; 1152 492; 1152 530; 1448 735; 1448 775; 638 870; 638 908; 688 870; 688 908',
  doors: `355 430 397 402; 408 430 432 480; 225 520 265 487; 195 508 220 555; 350 590 397 553; 408 520 432 568; 137 657 160 705; 142 770 182 740; 217 770 255 740; 310 705 338 652; 550 254 573 232 602 254; 675 254 700 232 728 254; 915 380 955 410; 1006 420 1033 470; 1006 528 1033 578; 933 557 977 590; 1255 590 1293 618; 1328 590 1370 618; 1343 650 1370 698; 1343 740 1370 790; 1178 680 1204 733; 1216 808 1257 838; 1326 808 1368 838; 392 808 433 841; 500 845 524 892; 500 932 524 982; 375 1022 416 990; 820 858 846 912; 823 930 862 898; 925 808 967 841; 995 850 1022 898; 901 962 940 932`,
  columns: '112 492 662 876 1027; 231 36 337 492 662 876 1027 1177 1472; 587 36 337 492 662 876 1027 1177 1472; 807 36 337 492 662 876 1027 1177 1472; 1165 36 337 492 662 876 1027 1177 1472; 1277 492 662 876 1027',
  labels: `110 185 Балкон 2.88; 115 350 Гостиная 16.87; 265 345 Спальня 11.76; 410 272 Кухня 17.47; 305 550 Прихожая 8.95; 440 455 Санузел 2.25; 435 545 Санузел 2.67; 105 685 Санузел 3.21; 235 672 Прихожая 8.02; 120 948 Кухня 19.13; 265 1015 Спальня 19.95; 125 1210 Балкон 2.88;
    425 900 Прихожая 8.57; 420 1100 Кухня 12.37; 560 882 Санузел 4.75; 578 1100 Спальня 17.51; 590 1332 Балкон 2.88; 760 880 Санузел 4.36; 770 1100 Спальня 17.77; 925 880 Прихожая 7.05; 945 1100 Кухня 16.81; 1090 1025 Гостиная 21.18; 950 1332 Балкон 2.88;
    955 265 Спальня 12.47; 1095 315 Кухня 10.99; 1115 180 Балкон 4.75; 965 515 Прихожая 8.66; 1090 540 Санузел 5.09; 1390 185 Балкон 2.88; 1255 430 Гостиная 16.63; 1395 430 Спальня 17.98; 1410 680 Санузел 2.82; 1275 730 Прихожая 13.26; 1410 755 Санузел 2.61; 1250 1000 Спальня 13.62; 1395 1000 Кухня 15.07; 1385 1208 Балкон 2.88`,
  areas: '120 480 2-комн 56.92м²; 265 885 1-комн 54.20м²; 580 1010 1-комн 45.91м²; 785 1015 2-комн 74.05м²; 948 348 1-комн 42.73м²; 1255 523 3-комн 88.42м²',
  sizes: '118 277 3080; 268 277 2900; 300 515 4220; 88 626 1780; 232 624 3920; 113 1116 2780; 257 1116 2900; 950 157 2700; 1252 277 2680; 1392 277 2900; 1277 663 3700; 420 941 3080; 420 1012 3080; 578 838 3100; 745 838 2980; 920 842 4000; 768 1234 4000; 945 966 2980; 1095 840 2980; 1252 1114 2680; 1392 1114 2900; 78 412 5680 90; 80 948 6880 90; 225 948 6880 90; 1055 1015 7100 90; 632 1100 5680 90; 700 1100 5680 90; 1215 432 6260 90; 1445 432 6260 90; 805 412 630кг; 805 540 450кг',
  nums: '187 1395 6200; 415 1395 3200; 577 1395 3500; 768 1395 4400; 950 1395 3100; 1101 1395 3100; 1323 1395 6100; 764 1463 29600',
  names: '775 690 Подъезд; 775 712 66.80м²'
};

const wing = {
  turn: -29,
  halls: '541 310 829 750 690 818 510 895 390 705 325 730 168 487; 110 510 168 487 270 650 228 688',
  rooms: `s 708 102 772 201 168 487 100 388; b 772 201 930 443 697 552 541 310; g 930 443 1137 760 903 870 829 750 697 552; k 1137 760 1266 959 893 1135 690 818 829 750 903 870; l 690 818 893 1135 660 1245 530 1048 453 928; g 298 740 390 705 510 895 453 928 530 1048 660 1245 432 1355 298 1355`,
  balconies: 's 735 115 776 95 826 175 780 195; b 873 335 918 314 967 388 920 411; g 1012 543 1055 524 1104 603 1060 625; k 1158 773 1203 752 1252 830 1206 850; k 1050 1070 1138 1022 1163 1066 1073 1110; l 805 1180 893 1140 918 1183 828 1226; g 445 1350 533 1308 558 1354 470 1397',
  axes: `772 201 993 98; 843 306 1062 204; 930 443 1142 343; 1060 640 1270 542; 1137 760 1348 660; 1266 959 1470 862; 541 310 829 750; 469 484 697 552`,
  dims: `903 0 1468 863; 865 20 1425 885; 432 1355 540 1520; 660 1245 745 1377; 893 1135 975 1263; 1033 1068 1113 1195; 1266 959 1363 1110; 515 1483 1345 1080; 535 1513 1363 1110; 508 1487 522 1477; 738 1381 752 1371; 968 1267 982 1257; 1106 1199 1120 1189; 480 200 770 650; 620 370 825 700;
    590 285 775 215; 755 200 900 435; 700 400 850 330; 790 500 930 440; 930 480 1125 750; 760 600 900 830; 900 835 1120 740; 905 1110 1250 960; 1005 840 1110 1030; 720 850 880 1110; 670 1220 870 1130; 570 1080 640 1215; 415 1325 640 1225; 380 1120 495 1310; 330 1130 390 1130; 395 705 490 860; 320 920 320 1110; 145 385 200 480; 540 850 690 790; 620 985 765 920`,
  thin: `336 278 400 378; 425 260 460 320; 680 388 843 306; 680 388 715 450; 735 485 760 525; 829 612 985 545; 790 580 829 612; 885 725 1060 640; 850 660 885 725; 975 900 1043 865 1135 1010; 903 935 930 920 1033 1068; 815 975 870 950; 610 1005 650 985 765 937; 650 985 785 1180; 395 1110 515 1310; 355 1108 395 1110; 312 917 420 868; 437 1088 530 1045; 487 975 565 938 575 960; 395 980 440 955; 395 980 425 1030 490 1000; 765 937 840 905; 740 850 800 825; 168 487 110 510 228 688 268 672; 600 330 650 385; 460 175 541 310`,
  walls: `100 388 708 102; 168 487 541 310 772 201; 708 102 735 135; 772 201 873 353; 915 405 1012 560; 1060 640 1160 790; 1205 850 1266 959 1110 1035; 1033 1068 865 1150; 815 1175 510 1315; 541 310 645 470; 697 552 770 668; 790 700 829 750; 687 818 893 1135; 453 928 660 1245; 298 754 298 1355; 325 730 557 619; 100 388 195 520; 215 565 325 730; 390 705 480 850; 298 740 325 730`,
  red: '697 552 930 443; 829 750 903 870 1137 760; 453 928 590 865; 630 842 687 818; 400 378 469 484 235 593; 298 1355 432 1355',
  windows: '797 237 830 287; 943 463 977 510; 1087 685 1122 733; 1213 878 1247 928; 1175 1005 1237 972; 935 1115 995 1085; 690 1232 750 1204; 560 1295 620 1267; 325 1355 390 1355; 312 917 390 882',
  stairs: '11 235 468 355 415 405 500 285 550',
  liftBoxes: '284 638 480 547 528 620 330 712; 293 643 372 608 412 665 336 704; 380 603 474 560 512 615 418 662',
  lifts: '299 647 370 614 405 662 336 695; 387 605 472 565 505 612 418 655',
  shafts: '405 262; 428 250; 600 302; 626 290; 757 543; 785 530; 740 848; 752 868; 510 1040; 545 1025; 520 1065; 555 1050',
  doors: `398 325 418 292; 450 300 472 268; 365 350 405 370; 455 350 506 358; 495 330 530 310 533 272; 600 380 647 380; 640 357 690 388; 712 450 750 467; 660 507 672 500 672 465; 752 608 798 608; 795 587 840 604; 823 618 868 647; 790 703 800 697 800 662; 840 745 863 712; 770 749 822 749; 772 793 812 810; 806 848 848 865; 1012 827 1055 845; 937 916 962 885; 868 950 890 920; 593 862 642 864; 497 885 508 880 508 842; 418 864 440 834; 535 902 577 919; 402 973 424 945; 575 958 612 975; 627 1018 647 985; 712 955 734 923; 425 1030 465 1046; 400 1103 424 1073; 315 1107 352 1090; 460 845 480 850`,
  points: '708 102; 772 201; 843 306; 930 443; 1060 640; 1137 760; 1266 959; 1033 1068; 893 1135; 660 1245; 432 1355; 298 1355; 298 1170; 298 1002; 298 754; 325 730; 235 593; 168 487; 100 388; 336 278; 541 310; 400 378; 469 484; 557 619; 697 552; 613 424; 829 750; 903 870; 765 937; 687 818; 453 928; 530 1048; -197 -820',
  labels: `255 380 Гостиная 17.18; 625 210 Кухня 14.37; 775 150 Балкон 2.88; 395 300 Санузел 2.60; 460 320 Прихожая 7.97; 720 300 Кухня 12.42; 790 410 Спальня 15.23; 610 340 Санузел 3.68; 660 435 Прихожая 6.77; 920 365 Балкон 2.88; 870 525 Кухня 11.10; 940 630 Спальня 12.42; 975 755 Гостиная 16.87; 815 665 Прихожая 7.17; 750 580 Санузел 3.72; 1055 572 Балкон 2.78; 1205 805 Балкон 2.88; 1150 890 Гостиная 17.17; 1035 970 Спальня 12.42; 920 1030 Кухня 12.92; 835 825 Прихожая 10.56; 770 810 Туалет 2.47; 795 875 Ванна 3.33; 1105 1068 Балкон 2.88;
    650 905 Прихожая 13.09; 525 925 Туалет 2.12; 565 995 Ванна 3.40; 660 1115 Кухня 17.19; 775 1060 Гостиная 17.19; 860 1185 Балкон 2.88; 390 815 Кухня 16.02; 355 960 Прихожая 12.68; 430 990 Туалет 1.92; 370 1225 Спальня 24.67; 525 1180 Гостиная 19.42; 500 1352 Балкон 2.88; 460 1040 Ванна 3.33`,
  areas: '325 358 1-комн 61.98м²; 755 430 2-комн 48.19м²; 895 635 2-комн 53.11м²; 908 983 2-комн 63.79м²; 605 917 1-комн 59.20м²; 367 1028 2-комн 76.62м²',
  sizes: '605 183 3600 -27; 235 358 3600 -27; 710 270 4140 -27; 770 380 4140 -27; 855 495 4140 -27; 955 670 4140 -27; 1005 800 5650 -27; 955 1080 3850 -27; 1070 1025 3680 -27; 1185 970 3090 -27; 710 1195 3080 -27; 825 1140 2970 -27; 575 1258 5400 -27; 665 805 7275 -27; 480 785 5782 62; 650 545 17580 62',
  nums: '903 75 3000 62; 970 178 3200 62; 1048 300 4100 62; 1155 465 6000 62; 1195 430 23900 62; 1262 625 3600 62; 1365 782 6000 62; 635 1443 5850 -27; 862 1328 6000 -27; 950 1320 21450 -27; 1045 1240 3600 -27; 1230 1150 6000 -27',
  names: '618 615 Подъезд 90; 600 615 77.94м² 90'
};

section.windows += '; ' + section.glazing;

const place = (ox, oy, sx, sy) => (x, y) => [ox + x / sx, oy + y / sy];
const towerAt = place(160, 520, 3, 2.45);
// The right tower is the left one mirrored and turned to follow the street.
const mirrored = (x, y) => {
  const [px, py] = towerAt(x, y);
  return [-.8786 * px + .4847 * py + 1650.5, .4854 * px + .873 * py - 20.2];
};

drawBlock(tower, towerAt);
drawBlock(corner, place(160, 1130, 3, 2.178));
drawBlock(towerText, towerAt);
drawBlock(section, place(560, 1400, 2.45, 3.015));
drawBlock(section, place(1159, 1400, 2.45, 3.015));
drawBlock(wing, place(1640, 1080, 2.24, 1.912));
drawBlock(tower, mirrored);
drawBlock(mirroredText, mirrored);
```
